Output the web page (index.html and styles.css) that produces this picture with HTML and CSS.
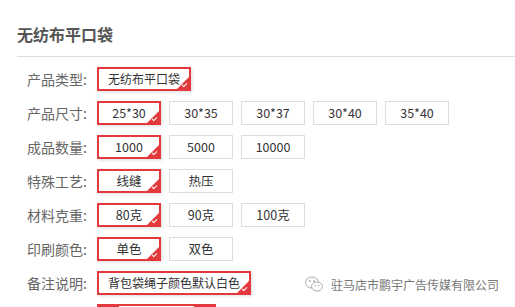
FILE: index.html
```html
<!DOCTYPE html>
<html>
<head>
<meta charset="utf-8">
<title>无纺布平口袋</title>
<link rel="stylesheet" href="styles.css">
</head>
<body>
  <div class="product">
    <h2 class="title">无纺布平口袋</h2>
    <div class="options">
      <div class="row">
        <span class="label">产品类型:</span>
        <span class="opt wide selected">无纺布平口袋</span>
      </div>
      <div class="row">
        <span class="label">产品尺寸:</span>
        <span class="opt selected">25*30</span>
        <span class="opt">30*35</span>
        <span class="opt">30*37</span>
        <span class="opt">30*40</span>
        <span class="opt">35*40</span>
      </div>
      <div class="row">
        <span class="label">成品数量:</span>
        <span class="opt selected">1000</span>
        <span class="opt">5000</span>
        <span class="opt">10000</span>
      </div>
      <div class="row">
        <span class="label">特殊工艺:</span>
        <span class="opt selected">线缝</span>
        <span class="opt">热压</span>
      </div>
      <div class="row">
        <span class="label">材料克重:</span>
        <span class="opt selected">80克</span>
        <span class="opt">90克</span>
        <span class="opt">100克</span>
      </div>
      <div class="row">
        <span class="label">印刷颜色:</span>
        <span class="opt selected">单色</span>
        <span class="opt">双色</span>
      </div>
      <div class="row">
        <span class="label">备注说明:</span>
        <span class="opt wide selected">背包袋绳子颜色默认白色</span>
      </div>
      <div class="row">
        <span class="label"></span>
        <div class="qty">
          <span class="qty-btn"></span>
          <span class="qty-input"></span>
          <span class="qty-btn"></span>
        </div>
      </div>
    </div>
  </div>

  <div class="watermark">
    <svg width="20" height="18" viewBox="0 0 20 18">
      <ellipse cx="8" cy="7.5" rx="6.5" ry="5.5" fill="none" stroke="#aaa" stroke-width="1"/>
      <ellipse cx="13" cy="11.5" rx="5.5" ry="4.5" fill="#fff" stroke="#aaa" stroke-width="1"/>
      <circle cx="5.8" cy="6" r="0.9" fill="#aaa"/>
      <circle cx="10" cy="6" r="0.9" fill="#aaa"/>
      <circle cx="11.3" cy="10.5" r="0.7" fill="#aaa"/>
      <circle cx="14.8" cy="10.5" r="0.7" fill="#aaa"/>
    </svg>
    <span>驻马店市鹏宇广告传媒有限公司</span>
  </div>
</body>
</html>
```

FILE: styles.css
```css
body {
    margin: 0;
    background-color: #fff;
    font-family: "Noto Sans CJK SC", "Liberation Sans", sans-serif;
    overflow: hidden;
}

.product {
    padding: 20px 0 0 17px;
}

.title {
    margin: 0;
    font-size: 16px;
    font-weight: bold;
    color: #555;
    line-height: 28px;
    padding-bottom: 8px;
    border-bottom: 1px solid #ddd;
}

.options {
    padding: 10px 0 0 10px;
}

.row {
    display: flex;
    align-items: center;
    height: 24px;
    margin-bottom: 10px;
}

.label {
    width: 70px;
    font-size: 14px;
    color: #666;
}

.opt {
    position: relative;
    box-sizing: border-box;
    width: 64px;
    height: 24px;
    margin-right: 8px;
    border: 1px solid #ddd;
    font-size: 12.5px;
    color: #333;
    line-height: 22px;
    text-align: center;
}

.opt.wide {
    width: auto;
    padding: 0 9px;
    font-size: 12px;
}

.opt.selected {
    border: 2px solid #e4393c;
    line-height: 20px;
    box-shadow: 1px 1px 3px rgba(0, 0, 0, 0.15);
}

.opt.selected::after {
    content: "";
    position: absolute;
    right: 0;
    bottom: 0;
    border-style: solid;
    border-width: 0 0 12px 12px;
    border-color: transparent transparent #e4393c transparent;
}

.opt.selected::before {
    content: "";
    position: absolute;
    right: 2px;
    bottom: 3px;
    width: 4px;
    height: 2px;
    border-left: 1px solid #fff;
    border-bottom: 1px solid #fff;
    transform: rotate(-45deg);
    z-index: 1;
}

.qty {
    display: flex;
    height: 26px;
}

.qty-btn {
    width: 22px;
    background-color: #e4393c;
}

.qty-input {
    box-sizing: border-box;
    width: 75px;
    border-top: 2px solid #e4393c;
}

.watermark {
    position: absolute;
    left: 304px;
    top: 275px;
    display: flex;
    align-items: center;
    gap: 7px;
    font-size: 12px;
    color: #777;
}
```
